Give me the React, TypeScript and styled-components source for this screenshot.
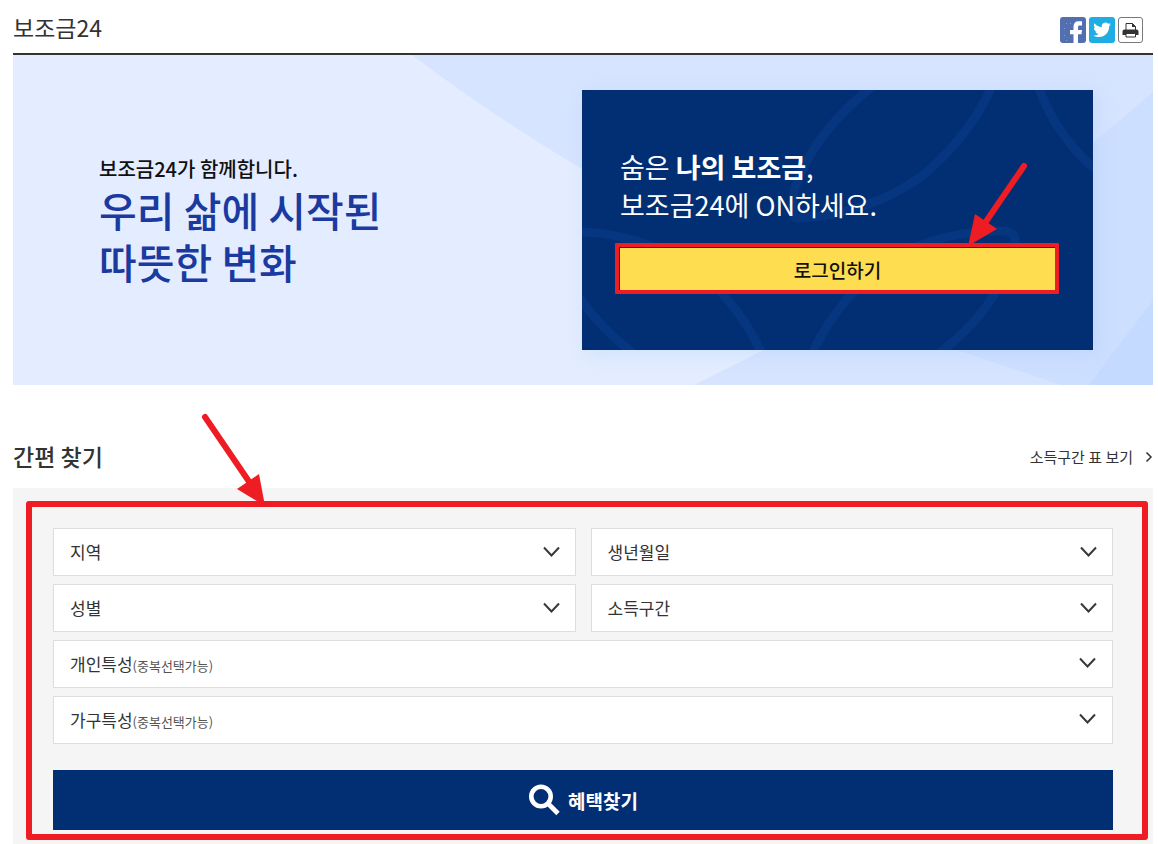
import React from "react";
import styled, { createGlobalStyle, css } from "styled-components";

const GlobalStyle = createGlobalStyle`
  *, *::before, *::after { box-sizing: border-box; }
  body {
    margin: 0;
    background: #fff;
    color: #333;
    font-family: "Noto Sans CJK KR", "Noto Sans", sans-serif;
  }
  h1, h2, p { margin: 0; }
  button, select { font-family: inherit; color: inherit; margin: 0; }
`;

const navy = "#022f73";
const red = "#ee1c23";

const Page = styled.div`
  padding: 0 5px 0 13px;
`;

const Header = styled.header`
  display: flex;
  justify-content: space-between;
  align-items: center;
  height: 55px;
  padding-right: 10px;
  border-bottom: 2px solid #333;
`;

const PageTitle = styled.h1`
  font-size: 23px;
  line-height: 32px;
  font-weight: 400;
`;

const ShareList = styled.div`
  display: flex;
  gap: 3px;
  padding-top: 6px;
`;

const ShareButton = styled.button<{ $bg: string; $outlined?: boolean }>`
  width: ${(p) => (p.$outlined ? "25px" : "26px")};
  height: 26px;
  padding: 0;
  overflow: hidden;
  border: ${(p) => (p.$outlined ? "1px solid #77777c" : "0")};
  border-radius: 3px;
  background: ${(p) => p.$bg};
  svg { display: block; width: 100%; height: 100%; }
`;

const Banner = styled.section`
  position: relative;
  display: flex;
  justify-content: space-between;
  align-items: center;
  min-height: 330px;
  padding: 35px 60px 35px 86px;
  background: #e4edff;
`;

const BannerArt = styled.svg`
  position: absolute;
  inset: 0;
  width: 100%;
  height: 100%;
`;

const Slogan = styled.div`
  position: relative;
  padding-top: 2px;
`;

const SloganLead = styled.p`
  color: #111;
  font-size: 20px;
  line-height: 28px;
  font-weight: 500;
`;

const SloganMain = styled.p`
  color: #1b3a9f;
  font-size: 41px;
  line-height: 52px;
  font-weight: 500;
`;

const LoginCard = styled.div`
  position: relative;
  width: 51.5%;
  max-width: 511px;
  min-height: 260px;
  padding: 58px 38px;
  background: ${navy};
  color: #fff;
  box-shadow: 4px 4px 18px rgba(160, 195, 250, 0.3);
`;

const CardArt = styled.svg`
  position: absolute;
  inset: 0;
  width: 100%;
  height: 100%;
`;

const LoginText = styled.p`
  position: relative;
  margin-bottom: 24px;
  font-size: 27px;
  line-height: 38px;
  strong { font-weight: 700; }
`;

const Highlighted = styled.div`
  position: relative;
`;

const LoginButton = styled.button`
  display: block;
  width: 100%;
  height: 44px;
  padding: 0;
  border: 0;
  background: #ffdd50;
  color: #111;
  font-size: 19px;
  line-height: 28px;
  font-weight: 500;
`;

const Marker = styled.div<{ $large?: boolean }>`
  position: absolute;
  pointer-events: none;
  ${(p) =>
    p.$large
      ? css`
          inset: 13px 5px 4px 13px;
          border: 6px solid ${red};
          border-radius: 3px;
        `
      : css`
          inset: -5px -4px -2px -5px;
          border: 4px solid ${red};
          border-radius: 1px;
        `}
`;

const Arrow = styled.svg<{ $large?: boolean }>`
  position: absolute;
  pointer-events: none;
  overflow: visible;
  width: 64px;
  height: 96px;
  ${(p) =>
    p.$large
      ? css`
          left: 187px;
          bottom: 100%;
          margin-bottom: -20px;
        `
      : css`
          right: 26px;
          bottom: 100%;
        `}
`;

const SectionHead = styled.div`
  display: flex;
  justify-content: space-between;
  align-items: center;
  padding: 54px 0 14px;
`;

const SectionTitle = styled.h2`
  font-size: 23px;
  line-height: 35px;
  font-weight: 500;
`;

const TableLink = styled.a`
  display: flex;
  align-items: center;
  gap: 12px;
  color: #333;
  font-size: 15px;
  line-height: 24px;
  text-decoration: none;
`;

const Finder = styled.form`
  position: relative;
  padding: 40px 40px 14px;
  background: #f5f5f5;
`;

const FieldGrid = styled.div`
  display: grid;
  grid-template-columns: 1fr 1fr;
  gap: 8px 15px;
  margin-bottom: 26px;
`;

const field = css`
  width: 100%;
  height: 48px;
  padding: 0 16px 2px;
  border: 1px solid #ddd;
  border-radius: 0;
  background: #fff;
  color: #333;
  font-size: 17px;
  text-align: left;
`;

const SelectBox = styled.label`
  position: relative;
  display: block;
  svg {
    position: absolute;
    right: 16px;
    top: 18px;
    pointer-events: none;
  }
`;

const Select = styled.select`
  ${field}
  appearance: none;
`;

const MultiSelect = styled.button`
  ${field}
  grid-column: 1 / -1;
  display: flex;
  align-items: center;
  justify-content: space-between;
  small { font-size: 13px; color: #555; }
`;

const SearchButton = styled.button`
  display: flex;
  justify-content: center;
  align-items: center;
  gap: 8px;
  width: 100%;
  height: 60px;
  padding: 0;
  border: 0;
  background: ${navy};
  color: #fff;
  font-size: 19px;
  font-weight: 700;
`;

const Chevron = () => (
  <svg width="17" height="12" viewBox="0 0 17 12" fill="none" aria-hidden="true">
    <path d="M1 1.500 8.500 9.500 16 1.500" stroke="#38383d" strokeWidth="2" />
  </svg>
);

const filters = ["지역", "생년월일", "성별", "소득구간"];
const traits = ["개인특성", "가구특성"];

export default function App() {
  return (
    <Page>
      <GlobalStyle />
      <Header>
        <PageTitle>보조금24</PageTitle>
        <ShareList>
          <ShareButton type="button" $bg="#5270b0" aria-label="페이스북">
            <svg viewBox="0 0 26 26">
              <path
                d="M13.500 26v-8.700H10v-4.300h3.500V10.200c0-3.900 2-5.900 5.200-5.900h3.300v4.200h-2.100c-1.400 0-1.900.6-1.900 1.900V13h4l-.5 4.300H18V26z"
                fill="#fff"
              />
              <g fill="#8fa3cf">
                <circle cx="6.500" cy="6.500" r=".6" />
                <circle cx="10.500" cy="6.500" r=".6" />
                <circle cx="4.500" cy="11.500" r=".6" />
                <circle cx="4.500" cy="18.500" r=".6" />
                <circle cx="6.500" cy="23.500" r=".6" />
              </g>
            </svg>
          </ShareButton>
          <ShareButton type="button" $bg="#1fade3" aria-label="트위터">
            <svg viewBox="0 0 26 26">
              <path
                transform="translate(4.200 4) scale(.74)"
                d="M23.950 4.570a10 10 0 0 1-2.820.770 4.960 4.960 0 0 0 2.160-2.720c-.950.550-2 .960-3.130 1.180a4.920 4.920 0 0 0-8.380 4.480C7.690 8.100 4.070 6.130 1.640 3.160a4.800 4.800 0 0 0-.660 2.480c0 1.710.870 3.210 2.190 4.100a4.900 4.900 0 0 1-2.230-.620v.060a4.920 4.920 0 0 0 3.950 4.830 5 5 0 0 1-2.210.080 4.940 4.940 0 0 0 4.600 3.420A9.870 9.870 0 0 1 0 19.540a13.990 13.990 0 0 0 7.550 2.210c9.050 0 14-7.500 14-13.980 0-.210 0-.420-.020-.630a9.940 9.940 0 0 0 2.420-2.570z"
                fill="#fff"
              />
            </svg>
          </ShareButton>
          <ShareButton type="button" $bg="#fff" $outlined aria-label="인쇄">
            <svg viewBox="0 0 23 24">
              <path d="M7 12V5.500h6.500l3 3V12" fill="#fff" stroke="#333" strokeWidth="1" />
              <path d="M13 5v4h4z" fill="#333" />
              <path d="M5.500 11.500h12a2 2 0 0 1 2 2V17h-16v-3.500a2 2 0 0 1 2-2z" fill="#333" />
              <path d="M7 15.500h9.500v3.500H7z" fill="#fff" stroke="#333" strokeWidth="1" />
            </svg>
          </ShareButton>
        </ShareList>
      </Header>

      <Banner>
        <BannerArt viewBox="0 0 1140 330" preserveAspectRatio="none" aria-hidden="true">
          <path d="M399 0Q478 60 569 114L800 270 681 330H1140V0z" fill="#d6e4ff" />
          <path d="M1140 37 1080 88 900 280 947 296 1048 330H1140z" fill="#cddfff" />
          <path d="M1140 245 1076 330H1140z" fill="#c5daff" />
        </BannerArt>
        <Slogan>
          <SloganLead>보조금24가 함께합니다.</SloganLead>
          <SloganMain>
            우리 삶에 시작된
            <br />
            따뜻한 변화
          </SloganMain>
        </Slogan>
        <LoginCard>
          <CardArt viewBox="0 0 511 260" preserveAspectRatio="none" aria-hidden="true">
            <g fill="none" stroke="#06367f" strokeWidth="9">
              <path d="M291 -4Q232 42 213 98Q206 128 216 128Q285 125 340 86Q388 46 410 -4" />
              <path d="M456 -4Q474 46 514 80" />
              <path d="M-2 142Q70 144 126 190Q160 220 180 264" />
              <path d="M-2 208Q18 238 52 264" />
              <path d="M230 264Q256 206 312 168Q360 140 422 141Q436 142 432 156Q418 218 356 264" />
            </g>
          </CardArt>
          <LoginText>
            숨은 <strong>나의 보조금</strong>,
            <br />
            보조금24에 ON하세요.
          </LoginText>
          <Highlighted>
            <LoginButton type="button">로그인하기</LoginButton>
            <Marker />
            <Arrow viewBox="0 0 64 96" aria-hidden="true">
              <path d="M59 14 20 71" stroke={red} strokeWidth="6" strokeLinecap="round" />
              <path d="M3 94 10 62 32 77z" fill={red} />
            </Arrow>
          </Highlighted>
        </LoginCard>
      </Banner>

      <SectionHead>
        <SectionTitle>간편 찾기</SectionTitle>
        <TableLink href="#income">
          소득구간 표 보기
          <svg width="8" height="12" viewBox="0 0 8 12" fill="none" aria-hidden="true">
            <path d="M1.500 1.500 6 6 1.500 10.500" stroke="#333" strokeWidth="1.500" />
          </svg>
        </TableLink>
      </SectionHead>

      <Finder>
        <FieldGrid>
          {filters.map((name) => (
            <SelectBox key={name}>
              <Select aria-label={name}>
                <option>{name}</option>
              </Select>
              <Chevron />
            </SelectBox>
          ))}
          {traits.map((name) => (
            <MultiSelect key={name} type="button" aria-haspopup="listbox">
              <span>
                {name}
                <small>(중복선택가능)</small>
              </span>
              <Chevron />
            </MultiSelect>
          ))}
        </FieldGrid>
        <SearchButton type="submit">
          <svg width="32" height="32" viewBox="0 0 32 32" fill="none" aria-hidden="true">
            <circle cx="13" cy="12.500" r="9.700" stroke="#fff" strokeWidth="4.600" />
            <path d="M20 19.500 30 29.500" stroke="#fff" strokeWidth="4.800" />
          </svg>
          혜택찾기
        </SearchButton>
        <Marker $large />
        <Arrow $large viewBox="0 0 64 96" aria-hidden="true">
          <path d="M5 5 50 71" stroke={red} strokeWidth="6" strokeLinecap="round" />
          <path d="M65 94 37 77 59 62z" fill={red} />
        </Arrow>
      </Finder>
    </Page>
  );
}
